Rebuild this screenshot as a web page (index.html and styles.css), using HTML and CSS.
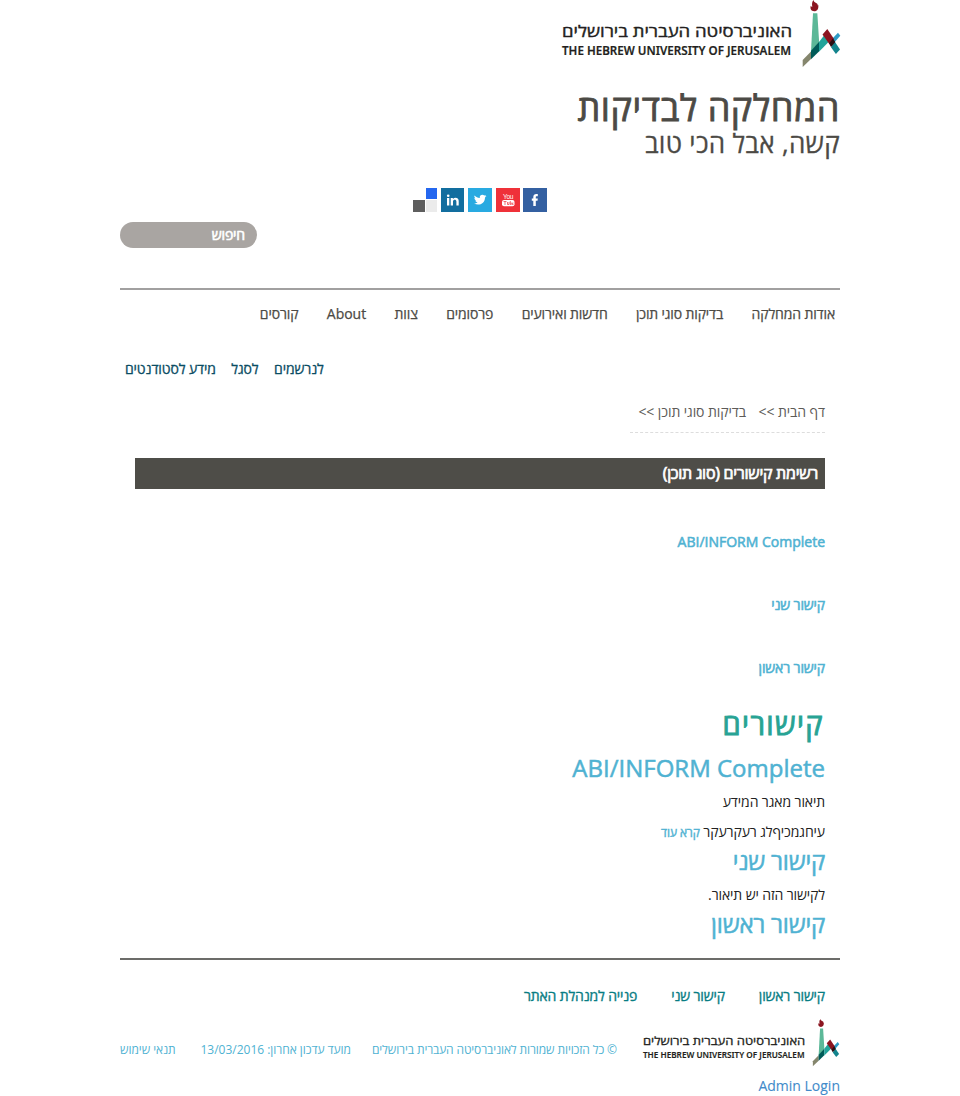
FILE: index.html
```html
<!DOCTYPE html>
<html lang="he" dir="rtl">
<head>
<meta charset="utf-8">
<title>המחלקה לבדיקות</title>
<link rel="stylesheet" href="styles.css">
</head>
<body>
<svg class="defs" width="0" height="0">
  <symbol id="emblem" viewBox="0 0 39 68">
    <path d="M11.800 0c-.6 3 4.500 2.500 3.900 5.300l-.2.300c.4-.1.600-.5.700-.9 .8 3.800-.9 6.500-4 6.500-3.200 0-4.300-2.800-3.400-5.500 .3.700.7 1.100 1.500 1.100C9.800 4 9.800 1.500 11.800 0z" fill="#8b1520"/>
    <path d="M11 13.300h4.300L17.200 43 9 51.500z" fill="#5cb898"/>
    <path d="M.7 60 9 51.500V59L.7 66.900z" fill="#85866d"/>
    <path d="m9 50.700 8-8.700v9.500L9 59.200z" fill="#005b58"/>
    <path d="m17 42 6-7.700 4.300 7L17 51.700z" fill="#22a49a"/>
    <path d="m36 32.700 2.300 3.100L31 44l-3-3z" fill="#2d9ac4"/>
    <path d="m20.500 34.500 4.800-5.500L32 39l-4.700 5z" fill="#8b1520"/>
    <path d="m29 47.300 3.500-6L38 49.500 33.900 54z" fill="#13848d"/>
    <path d="m27 43.500 4-5 2.300 3.500-4.300 5z" fill="#2b0d12"/>
  </symbol>
</svg>
<div class="page">
  <header class="brand">
    <svg class="brand-logo" viewBox="0 0 278 68" direction="ltr">
      <use href="#emblem" x="240" y="0" width="39" height="68"/>
      <text class="logo-he" direction="rtl" x="230" y="37" textLength="230" lengthAdjust="spacingAndGlyphs">האוניברסיטה העברית בירושלים</text>
      <text class="logo-en" x="0" y="55" textLength="229" lengthAdjust="spacingAndGlyphs">THE HEBREW UNIVERSITY OF JERUSALEM</text>
    </svg>
    <h1 class="site-title">המחלקה לבדיקות</h1>
    <p class="site-slogan">קשה, אבל הכי טוב</p>
  </header>

  <div class="social">
    <svg viewBox="0 0 24 24"><path fill="#3460a1" d="M0 0h24v24H0z"/><path fill="#fff" d="M10.300 18v-5.200H8.800v-2.300h1.500V9c0-2 1.200-3 3-3h1.500v2.300h-1c-.8 0-1 .3-1 1v1.200h2l-.3 2.300h-1.700V18z"/></svg>
    <svg viewBox="0 0 24 24"><path fill="#ef3139" d="M0 0h24v24H0z"/><text class="yt" x="12" y="11.200">You</text><rect x="6" y="12" width="12.500" height="6.300" rx="2" fill="#fff"/><path d="M7.500 13.500h3M9 13.500v3.500M11.500 14v2.500h1.500V14M14.300 13v3.500h.9v-2M17.500 15h-1.200v1.500h1.200" fill="none" stroke="#ef3139" stroke-width=".7"/></svg>
    <svg viewBox="0 0 24 24"><path fill="#29aae1" d="M0 0h24v24H0z"/><path fill="#fff" d="M6.500 7.500c1.500 1.600 3.200 2.300 5.300 2.400-.5-3 2.900-4.100 4.500-2.400l1.700-.6-.9 1.400 1.400-.3-1.500 1.500c.1 6.200-6.200 8.800-11 6 1.500 0 2.600-.3 3.600-1.200-1.300-.1-2-.7-2.300-1.700h1c-1.200-.6-1.900-1.400-1.900-2.600l1 .3c-1.100-.9-1.300-2-.9-2.800z"/></svg>
    <svg viewBox="0 0 24 24"><path fill="#126e9f" d="M0 0h23v24H0z"/><path fill="#fff" d="M6 10h2.300v7.500H6zM9.700 10h2.200v1c1.700-2 5.800-1.600 5.800 2v4.500h-2.300v-4c0-2.300-3.400-2.300-3.400 0v4H9.700z"/><circle cx="7.200" cy="7.700" r="1.300" fill="#fff"/></svg>
    <svg viewBox="0 0 24 24"><path fill="#fff" d="M0 0h24v24H0z"/><path fill="#2467ef" d="M13 0h11v11H13z"/><path fill="#5e5e5e" d="M0 12h12v12H0z"/><path fill="#ebebeb" d="M13 12h11v12H13z"/></svg>
  </div>

  <div class="search">חיפוש</div>

  <nav class="main-nav">
    <a>אודות המחלקה</a><a>בדיקות סוגי תוכן</a><a>חדשות ואירועים</a><a>פרסומים</a><a>צוות</a><a class="latin">About</a><a>קורסים</a>
  </nav>
  <nav class="sub-nav"><a>לנרשמים</a><a>לסגל</a><a>מידע לסטודנטים</a></nav>

  <main class="content">
    <div class="crumbs"><span>דף הבית &gt;&gt;</span><span>בדיקות סוגי תוכן &gt;&gt;</span></div>
    <h2 class="bar">רשימת קישורים (סוג תוכן)</h2>
    <ul class="links">
      <li class="latin" dir="ltr">ABI/INFORM Complete</li>
      <li>קישור שני</li>
      <li>קישור ראשון</li>
    </ul>
    <h2 class="section">קישורים</h2>
    <h3 class="entry latin">ABI/INFORM Complete</h3>
    <div class="body">
      <p class="desc">תיאור מאגר המידע</p>
      <p class="desc">עיחגמכיףלג רעקרעקר <a class="more">קרא עוד</a></p>
    </div>
    <h3 class="entry">קישור שני</h3>
    <div class="body"><p class="desc">לקישור הזה יש תיאור.</p></div>
    <h3 class="entry">קישור ראשון</h3>
  </main>

  <footer class="footer">
    <nav class="foot-nav"><a>קישור ראשון</a><a>קישור שני</a><a>פנייה למנהלת האתר</a></nav>
    <div class="legal">
      <svg class="foot-logo" viewBox="0 0 278 68" direction="ltr">
        <use href="#emblem" x="240" y="0" width="39" height="68"/>
        <text class="logo-he" direction="rtl" x="230" y="37" textLength="230" lengthAdjust="spacingAndGlyphs">האוניברסיטה העברית בירושלים</text>
        <text class="logo-en" x="0" y="55" textLength="229" lengthAdjust="spacingAndGlyphs">THE HEBREW UNIVERSITY OF JERUSALEM</text>
      </svg>
      <span class="copy">© כל הזכויות שמורות לאוניברסיטה העברית בירושלים</span>
      <span class="updated">מועד עדכון אחרון: <span class="latin">13/03/2016</span></span>
      <span class="terms">תנאי שימוש</span>
    </div>
    <a class="admin latin">Admin Login</a>
  </footer>
</div>
</body>
</html>
```
FILE: styles.css
```css
* { box-sizing: border-box; margin: 0; padding: 0; }
body { background: #fff; font: 14px/20px "Open Sans", "Noto Sans", sans-serif; color: #222; }
.defs { display: block; height: 0; }
.page { width: 720px; margin: 0 auto; white-space: nowrap; letter-spacing: -.14px; }
.latin { letter-spacing: 0; }
.brand { height: 188px; letter-spacing: 0; }
.brand-logo { display: block; width: 278px; height: 68px; overflow: visible; }
.logo-he { font: 500 16px "Open Sans", sans-serif; letter-spacing: 0; fill: #231f20; stroke: #231f20; stroke-width: .4px; }
.logo-en { font: 600 12px "Noto Sans", sans-serif; letter-spacing: 0; fill: #231f20; stroke: #231f20; stroke-width: .2px; }
.site-title { font-size: 36px; line-height: 42px; font-weight: 400; letter-spacing: .55px; color: #4c4a45; margin-top: 19px; -webkit-text-stroke: .8px #4c4a45; }
.site-slogan { font-size: 26px; line-height: 30px; letter-spacing: .3px; color: #4c4a45; margin-top: -1px; -webkit-text-stroke: .3px #4c4a45; }
.social { display: flex; justify-content: center; gap: 3.5px; height: 34px; }
.social svg { width: 24px; height: 24px; }
.yt { font: 6.5px "Liberation Sans", sans-serif; letter-spacing: -.3px; fill: #fff; text-anchor: middle; }
.search { width: 137px; height: 26px; margin-right: auto; padding-right: 12px; border-radius: 13px; background: #a9a5a2; color: #fff; line-height: 26px; -webkit-text-stroke: .6px #fff; }
.main-nav { display: flex; gap: 28.4px; margin-top: 40px; padding: 14px 5px 0; height: 69px; border-top: 2px solid #a1a0a0; color: #4c4a45; -webkit-text-stroke: .25px; }
.sub-nav { display: flex; justify-content: flex-end; gap: 15.6px; height: 45px; padding: 2px 0 0 5px; color: #0a4c63; letter-spacing: -.12px; -webkit-text-stroke: .3px; }
.content { padding: 0 15px; height: 556px; }
.crumbs { display: flex; gap: 12.5px; width: 195px; height: 31px; color: #5d5b58; letter-spacing: -.08px; border-bottom: 1px dashed #ddd; }
.bar { height: 31px; margin-top: 25px; padding-right: 7px; background: #4e4d48; color: #fff; font-size: 16px; line-height: 31px; font-weight: 400; letter-spacing: -.27px; -webkit-text-stroke: .7px #fff; }
.links { list-style: none; padding-top: 43px; height: 217px; color: #4fb2d2; -webkit-text-stroke: .55px; }
.links li { height: 63px; text-align: right; }
.section { font-size: 29px; line-height: 36px; font-weight: 400; letter-spacing: 1.4px; padding-right: 1px; color: #27a394; height: 46px; -webkit-text-stroke: .9px; }
.entry { font-size: 24px; line-height: 32px; height: 33px; font-weight: 400; color: #4fb2d2; -webkit-text-stroke: .5px; }
.entry:not(.latin) { letter-spacing: -.23px; }
.body { position: relative; top: 7px; }
.desc { height: 30px; letter-spacing: -.11px; }
.more { font-size: 12px; color: #4fb2d2; -webkit-text-stroke: .4px; }
.footer { border-top: 2px solid #6c6c69; }
.foot-nav { display: flex; gap: 34px; height: 59px; padding: 26px 15px 0; color: #087d83; letter-spacing: -.16px; -webkit-text-stroke: .35px; }
.legal { display: flex; align-items: center; height: 48px; font-size: 12px; color: #4fb2d2; }
.foot-logo { width: 198px; height: 48px; overflow: visible; }
.copy { margin-right: 25px; margin-top: 13px; letter-spacing: -.12px; }
.updated { margin-right: 21px; margin-top: 13px; letter-spacing: -.05px; }
.terms { margin-right: auto; margin-top: 13px; letter-spacing: -.05px; }
.admin { display: block; margin-top: 9px; color: #428bca; -webkit-text-stroke: .1px; }
```
